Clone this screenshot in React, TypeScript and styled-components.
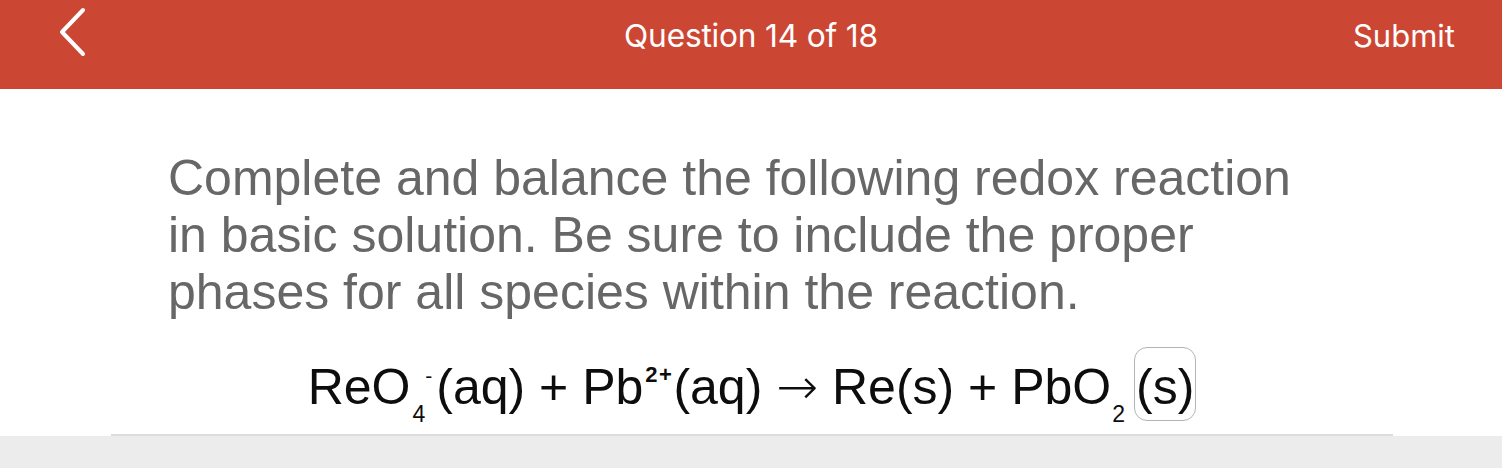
import React from "react";
import styled, { createGlobalStyle } from "styled-components";

const GlobalStyle = createGlobalStyle`
  html, body {
    margin: 0;
    padding: 0;
    background: #ffffff;
  }

  body {
    font-family: "Liberation Sans", Arial, sans-serif;
  }
`;

const Page = styled.div`
  width: 1502px;
  height: 468px;
  display: flex;
  flex-direction: column;
  overflow: hidden;
`;

const Header = styled.header`
  height: 89px;
  flex-shrink: 0;
  background-color: #cc4733;
  display: grid;
  grid-template-columns: 1fr auto 1fr;
  align-items: center;
  color: #ffffff;
`;

const BackButton = styled.button`
  justify-self: start;
  background: none;
  border: none;
  padding: 0;
  margin: 0 0 26px 57px;
  width: 34px;
  height: 50px;
  display: flex;
  align-items: center;
  justify-content: center;
  cursor: pointer;
`;

const Title = styled.h1`
  margin: 0 0 18px;
  font-family: Inter, "Liberation Sans", sans-serif;
  font-size: 31.7px;
  font-weight: 400;
  letter-spacing: -0.2px;
`;

const SubmitButton = styled.button`
  justify-self: end;
  background: none;
  border: none;
  margin: 0 47px 18px 0;
  padding: 0;
  color: #ffffff;
  font-family: Inter, "Liberation Sans", sans-serif;
  font-size: 31px;
  font-weight: 400;
  cursor: pointer;
`;

const Content = styled.main`
  flex: 1;
  min-height: 0;
  margin: 0 109px 0 111px;
  border-bottom: 2px solid #dcdcdc;
  display: flex;
  flex-direction: column;
  padding-top: 61px;
`;

const Prompt = styled.p`
  margin: 0 0 0 57px;
  max-width: 1150px;
  font-size: 50px;
  line-height: 57px;
  color: #676767;
`;

const Equation = styled.div`
  margin-top: 38px;
  text-align: center;
  font-size: 50px;
  line-height: 57px;
  color: #0d0d0d;
  white-space: nowrap;
`;

const Sub = styled.span<{ $gap?: number }>`
  font-size: 23px;
  line-height: 0;
  vertical-align: -18px;
  margin-left: ${({ $gap }) => $gap ?? 2}px;
`;

const Sup = styled.span<{ $bold?: boolean }>`
  font-size: ${({ $bold }) => ($bold ? 22 : 21)}px;
  line-height: 0;
  font-weight: ${({ $bold }) => ($bold ? 700 : 400)};
  letter-spacing: ${({ $bold }) => ($bold ? 1.5 : 0)}px;
  vertical-align: ${({ $bold }) => ($bold ? 22 : 21)}px;
  margin: 0 ${({ $bold }) => ($bold ? 0 : 4)}px 0
    ${({ $bold }) => ($bold ? 2 : 0)}px;
`;

const Arrow = styled.span`
  font-family: "DejaVu Sans", sans-serif;
  font-size: 50px;
  font-weight: 200;
  line-height: 0;
`;

const AnswerBox = styled.span`
  border: 1.5px solid #b4b4b4;
  border-radius: 13px;
  padding: 11px 1px 5px;
  margin-left: 9px;
`;

const Footer = styled.div`
  height: 32px;
  flex-shrink: 0;
  background-color: #ececec;
`;

function ChevronLeft() {
  return (
    <svg width="34" height="50" viewBox="0 0 34 50" fill="none">
      <path
        d="M26 3 L5 25 L26 47"
        stroke="#ffffff"
        strokeWidth="4"
        strokeLinecap="round"
        strokeLinejoin="round"
      />
    </svg>
  );
}

function App() {
  return (
    <>
      <GlobalStyle />
      <Page>
        <Header>
          <BackButton aria-label="Back">
            <ChevronLeft />
          </BackButton>
          <Title>Question 14 of 18</Title>
          <SubmitButton>Submit</SubmitButton>
        </Header>

        <Content>
          <Prompt>
            Complete and balance the following redox reaction in basic
            solution. Be sure to include the proper phases for all species
            within the reaction.
          </Prompt>

          <Equation>
            ReO<Sub $gap={2}>4</Sub>
            <Sup>-</Sup>(aq) + Pb<Sup $bold>2+</Sup>(aq) <Arrow>→</Arrow>{" "}
            Re(s) + PbO<Sub $gap={1}>2</Sub>
            <AnswerBox>(s)</AnswerBox>
          </Equation>
        </Content>

        <Footer />
      </Page>
    </>
  );
}

export default App;
